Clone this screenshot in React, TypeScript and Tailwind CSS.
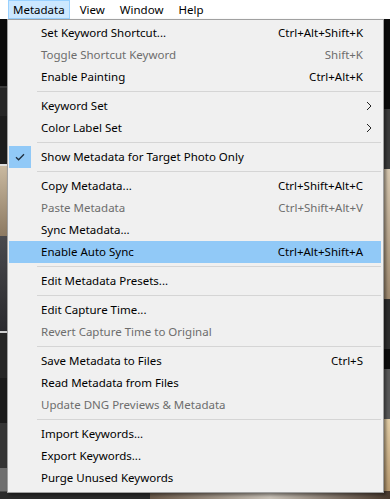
import { Fragment } from "react"

type Item =
  | { sep: true }
  | { label: string; shortcut?: string; disabled?: boolean; submenu?: boolean; checked?: boolean; active?: boolean; sep?: false }

const items: Item[] = [
  { label: "Set Keyword Shortcut...", shortcut: "Ctrl+Alt+Shift+K" },
  { label: "Toggle Shortcut Keyword", shortcut: "Shift+K", disabled: true },
  { label: "Enable Painting", shortcut: "Ctrl+Alt+K" },
  { sep: true },
  { label: "Keyword Set", submenu: true },
  { label: "Color Label Set", submenu: true },
  { sep: true },
  { label: "Show Metadata for Target Photo Only", checked: true },
  { sep: true },
  { label: "Copy Metadata...", shortcut: "Ctrl+Shift+Alt+C" },
  { label: "Paste Metadata", shortcut: "Ctrl+Shift+Alt+V", disabled: true },
  { label: "Sync Metadata..." },
  { label: "Enable Auto Sync", shortcut: "Ctrl+Alt+Shift+A", active: true },
  { sep: true },
  { label: "Edit Metadata Presets..." },
  { sep: true },
  { label: "Edit Capture Time..." },
  { label: "Revert Capture Time to Original", disabled: true },
  { sep: true },
  { label: "Save Metadata to Files", shortcut: "Ctrl+S" },
  { label: "Read Metadata from Files" },
  { label: "Update DNG Previews & Metadata", disabled: true },
  { sep: true },
  { label: "Import Keywords..." },
  { label: "Export Keywords..." },
  { label: "Purge Unused Keywords" },
]

function Check() {
  return (
    <svg width="10" height="8" viewBox="0 0 10 8" fill="none">
      <path d="M1 4.2 L3.6 6.8 L9 1.2" stroke="#1f2f3f" strokeWidth="1.3" />
    </svg>
  )
}

function Chevron() {
  return (
    <svg width="6" height="10" viewBox="0 0 6 10" fill="none">
      <path d="M1 1 L5 5 L1 9" stroke="#222" strokeWidth="1" />
    </svg>
  )
}

function MenuRow({ item }: { item: Exclude<Item, { sep: true }> }) {
  return (
    <div
      className={`ml-[1px] mr-[2px] h-[22px] flex items-center ${item.active ? "bg-[#91c9f7]" : ""} ${
        item.disabled ? "text-[#6d6d6d]" : "text-black"
      }`}
    >
      <div className={`w-[22px] h-[22px] flex items-center justify-center ${item.checked ? "bg-[#91c9f7]" : ""}`}>
        {item.checked && <Check />}
      </div>
      <span className="ml-[10px] flex-1 whitespace-nowrap">{item.label}</span>
      {item.shortcut && <span className="mr-[18px] whitespace-nowrap">{item.shortcut}</span>}
      {item.submenu && (
        <span className="mr-[9px] flex items-center">
          <Chevron />
        </span>
      )}
    </div>
  )
}

export default function App() {
  return (
    <div
      className="relative w-[390px] h-[499px] overflow-hidden bg-[#1a1a1a] text-[11.5px] leading-none"
      style={{ fontFamily: '"Noto Sans", "Open Sans", sans-serif' }}
    >
      {/* menu bar */}
      <div className="h-[19px] bg-white flex items-stretch pl-[8px] gap-[5px] text-black">
        <span className="px-[4px] flex items-center border border-[#99d1ff] bg-[#cce8ff]">Metadata</span>
        <span className="px-[4px] flex items-center border border-transparent">View</span>
        <span className="px-[4px] flex items-center border border-transparent">Window</span>
        <span className="px-[4px] flex items-center border border-transparent">Help</span>
      </div>

      {/* lightroom window behind */}
      <div className="flex h-[472px]">
        <div className="w-[7px] flex flex-col">
          <div className="h-[67px] bg-[#0c0c0c]" />
          <div className="h-[2px] bg-[#3a3a3a]" />
          <div className="h-[28px] bg-[#272727]" />
          <div className="h-[48px] bg-[#1d1d1d]" />
          <div className="h-[2px] bg-[#e0e0e0]" />
          <div className="h-[70px] bg-gradient-to-b from-[#c9b9a0] to-[#8d7a62]" />
          <div className="h-[95px] bg-gradient-to-b from-[#4a4a4e] to-[#2a2a2e]" />
          <div className="h-[2px] bg-[#d0d0d0]" />
          <div className="h-[45px] bg-[#262626]" />
          <div className="h-[45px] bg-[#1b1b1b]" />
          <div className="h-[45px] bg-[#353535]" />
          <div className="flex-1 bg-[#6f6f6f]" />
        </div>
        <div className="flex-1" />
        <div className="w-[6px] flex flex-col">
          <div className="h-[90px] bg-[#0b0b0b]" />
          <div className="h-[60px] bg-[#3c3c3c]" />
          <div className="h-[130px] bg-gradient-to-b from-[#d8c9b2] to-[#9f8a70]" />
          <div className="h-[50px] bg-[#2e2e2e]" />
          <div className="h-[20px] bg-[#0d0d0d]" />
          <div className="h-[50px] bg-[#5a5a5a]" />
          <div className="flex-1 bg-gradient-to-b from-[#e4cfa8] to-[#b89a70]" />
        </div>
      </div>
      <div className="flex h-[8px]">
        <div className="w-[150px] bg-[#2a2a2a] border-t border-[#4a4a4a]" />
        <div className="flex-1 bg-gradient-to-r from-[#6b5a4a] via-[#c9c2b8] to-[#4a3a2e]" />
      </div>

      {/* dropdown */}
      <div className="absolute left-[7px] top-[19px] w-[377px] bg-[#f0f0f0] border border-[#a0a0a0] pt-[2px] pb-[3px] shadow-[2px_2px_3px_rgba(0,0,0,0.45)]">
        {items.map((item, i) => (
          <Fragment key={i}>
            {item.sep ? (
              <div className="h-[7px] flex items-center pl-[29px] pr-[2px]">
                <div className="h-px w-full bg-[#d5d5d5]" />
              </div>
            ) : (
              <MenuRow item={item} />
            )}
          </Fragment>
        ))}
      </div>
    </div>
  )
}
